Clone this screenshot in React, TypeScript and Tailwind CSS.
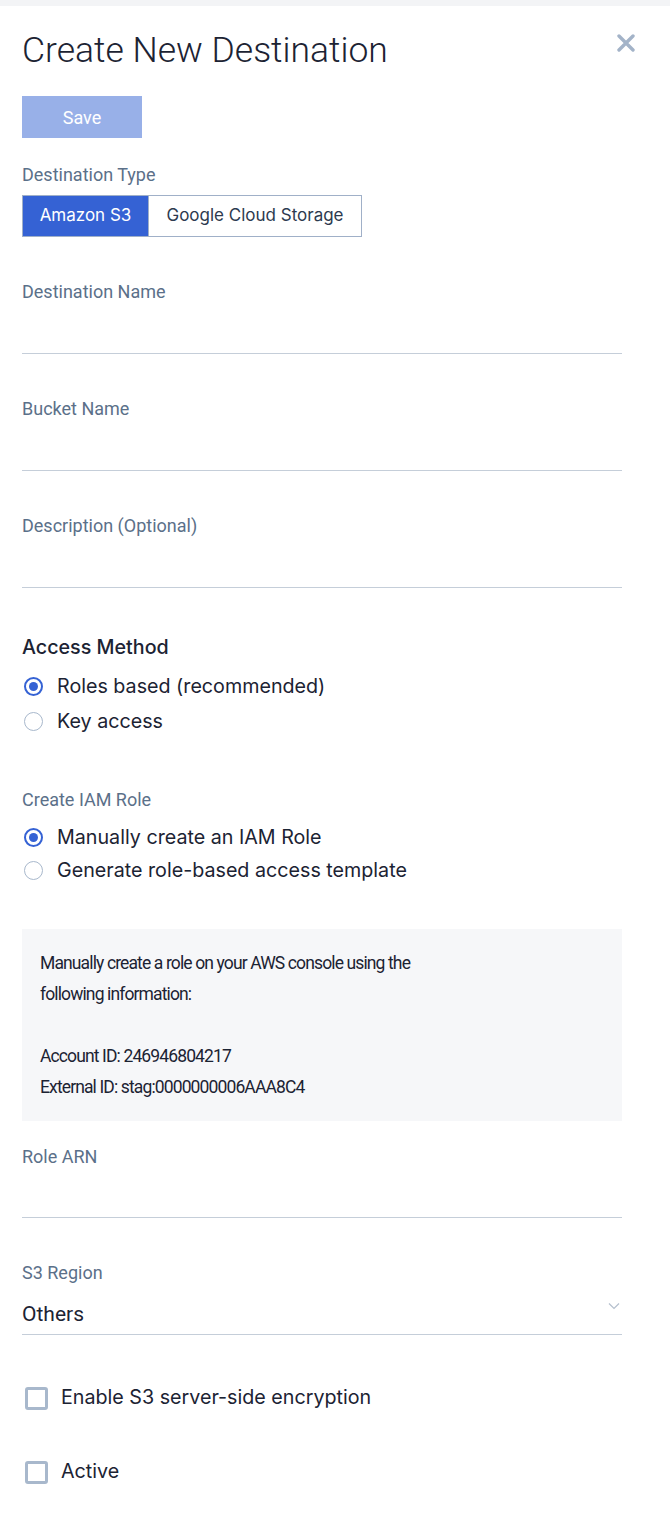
import { useState } from "react";

const labelCls = "text-[18px] leading-[25px] text-[#5b7089] font-['Roboto',sans-serif]";
const bodyCls = "text-[19.7px] text-[#1c2333] font-['Inter',sans-serif]";

function Field({ label }: { label: string }) {
  return (
    <div className="mt-[42px]">
      <div className={labelCls}>{label}</div>
      <div className="h-[50px] border-b border-[#c5ced9]" />
    </div>
  );
}

function Radio({ checked, label, h }: { checked: boolean; label: string; h: string }) {
  return (
    <div className={`flex items-center ${h}`}>
      <span
        className={`ml-[2px] flex h-[19px] w-[19px] items-center justify-center rounded-full ${
          checked ? "border-2 border-[#3562d4]" : "border-[1.5px] border-[#a8b8cc]"
        }`}
      >
        {checked && <span className="h-[9px] w-[9px] rounded-full bg-[#3562d4]" />}
      </span>
      <span className={`ml-[14px] ${bodyCls}`}>{label}</span>
    </div>
  );
}

function Checkbox({ label }: { label: string }) {
  return (
    <div className="flex h-[30px] items-center">
      <span className="ml-[3px] h-[23px] w-[23px] rounded-[3px] border-[3px] border-[#a8b8cc]" />
      <span className={`ml-[13px] ${bodyCls}`}>{label}</span>
    </div>
  );
}

export default function App() {
  const [type, setType] = useState("s3");

  return (
    <div className="min-h-[1526px] w-[670px] bg-white">
      <div className="h-[6px] bg-[#f3f4f6]" />
      <div className="w-[600px] ml-[22px] flex flex-col">
        <div className="mt-[24px] flex items-start justify-between">
          <h1 className="text-[35.5px] leading-[40px] font-light text-[#1c2333] font-['Roboto',sans-serif]">
            Create New Destination
          </h1>
          <button className="mt-[4px] mr-[-13px] text-[#a3b3c8]">
            <svg width="18" height="18" viewBox="0 0 18 18" fill="none">
              <path d="M2 2L16 16M16 2L2 16" stroke="currentColor" strokeWidth="3.4" strokeLinecap="round" />
            </svg>
          </button>
        </div>

        <button className="mt-[26px] h-[42px] w-[120px] bg-[#98b0e8] text-[18px] text-white font-['Roboto',sans-serif]">
          Save
        </button>

        <div className={`mt-[24px] ${labelCls}`}>Destination Type</div>
        <div className="mt-[8px] flex h-[42px] text-[17px] font-['Inter',sans-serif]">
          <button
            onClick={() => setType("s3")}
            className={`w-[127px] border border-[#a0b0c8] ${type === "s3" ? "bg-[#3562d4] text-white" : "bg-white text-[#2d3a4f]"}`}
          >
            Amazon S3
          </button>
          <button
            onClick={() => setType("gcs")}
            className={`w-[213px] border border-l-0 border-[#a0b0c8] ${type === "gcs" ? "bg-[#3562d4] text-white" : "bg-white text-[#2d3a4f]"}`}
          >
            Google Cloud Storage
          </button>
        </div>

        <Field label="Destination Name" />
        <Field label="Bucket Name" />
        <Field label="Description (Optional)" />

        <div className="mt-[45px] text-[19.7px] leading-[28px] font-medium text-[#1c2333] font-['Inter',sans-serif]">
          Access Method
        </div>
        <div className="mt-[8px]">
          <Radio checked label="Roles based (recommended)" h="h-[35px]" />
          <Radio checked={false} label="Key access" h="h-[35px]" />
        </div>

        <div className={`mt-[48px] ${labelCls}`}>Create IAM Role</div>
        <div className="mt-[9px]">
          <Radio checked label="Manually create an IAM Role" h="h-[33px]" />
          <Radio checked={false} label="Generate role-based access template" h="h-[33px]" />
        </div>

        <div className="mt-[42px] bg-[#f6f7f9] px-[18px] pt-[19px] pb-[18px] text-[17.5px] leading-[31px] text-[#1c2333] font-['Roboto',sans-serif] tracking-[-0.05em]">
          <div>Manually create a role on your AWS console using the</div>
          <div>following information:</div>
          <div className="h-[31px]" />
          <div>Account ID: 246946804217</div>
          <div>External ID: stag:0000000006AAA8C4</div>
        </div>

        <div className="mt-[23px]">
          <div className={labelCls}>Role ARN</div>
          <div className="h-[49px] border-b border-[#c5ced9]" />
        </div>

        <div className="mt-[42px]">
          <div className={labelCls}>S3 Region</div>
          <div className="flex h-[50px] items-end justify-between border-b border-[#c5ced9] pb-[7px]">
            <span className="text-[21px] leading-[26px] text-[#1c2333] font-['Roboto',sans-serif]">Others</span>
            <svg className="mb-[17px] mr-[2px]" width="12" height="8" viewBox="0 0 12 8" fill="none">
              <path d="M1 1.5L6 6.5L11 1.5" stroke="#b5c0ce" strokeWidth="1.2" />
            </svg>
          </div>
        </div>

        <div className="mt-[48px]">
          <Checkbox label="Enable S3 server-side encryption" />
        </div>
        <div className="mt-[44px]">
          <Checkbox label="Active" />
        </div>
      </div>
    </div>
  );
}
